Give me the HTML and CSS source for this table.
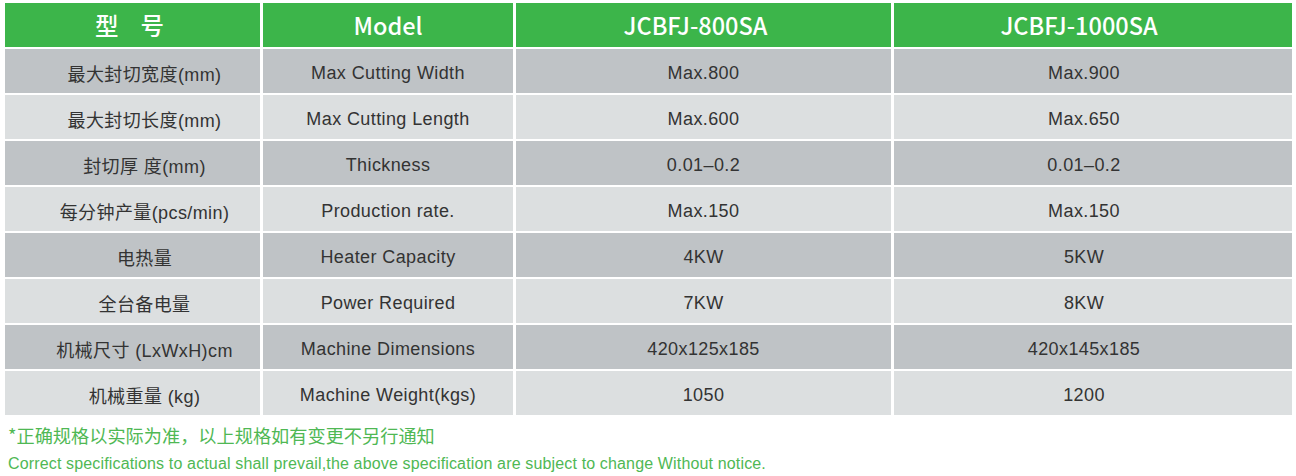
FILE: index.html
```html
<!DOCTYPE html>
<html lang="zh">
<head>
<meta charset="utf-8">
<title>Specifications</title>
<link rel="stylesheet" href="styles.css">
</head>
<body>
<div class="spec">
  <div class="cell head c1 pair"><span>型</span><span>号</span></div>
  <div class="cell head c2">Model</div>
  <div class="cell head c3">JCBFJ-800SA</div>
  <div class="cell head c4">JCBFJ-1000SA</div>

  <div class="cell dark c1">最大封切宽度(mm)</div>
  <div class="cell dark c2">Max Cutting Width</div>
  <div class="cell dark c3">Max.800</div>
  <div class="cell dark c4">Max.900</div>

  <div class="cell light c1">最大封切长度(mm)</div>
  <div class="cell light c2">Max Cutting Length</div>
  <div class="cell light c3">Max.600</div>
  <div class="cell light c4">Max.650</div>

  <div class="cell dark c1">封切厚 度(mm)</div>
  <div class="cell dark c2">Thickness</div>
  <div class="cell dark c3">0.01–0.2</div>
  <div class="cell dark c4">0.01–0.2</div>

  <div class="cell light c1">每分钟产量(pcs/min)</div>
  <div class="cell light c2">Production rate.</div>
  <div class="cell light c3">Max.150</div>
  <div class="cell light c4">Max.150</div>

  <div class="cell dark c1">电热量</div>
  <div class="cell dark c2">Heater Capacity</div>
  <div class="cell dark c3">4KW</div>
  <div class="cell dark c4">5KW</div>

  <div class="cell light c1">全台备电量</div>
  <div class="cell light c2">Power Required</div>
  <div class="cell light c3">7KW</div>
  <div class="cell light c4">8KW</div>

  <div class="cell dark c1">机械尺寸 (LxWxH)cm</div>
  <div class="cell dark c2">Machine Dimensions</div>
  <div class="cell dark c3">420x125x185</div>
  <div class="cell dark c4">420x145x185</div>

  <div class="cell light c1">机械重量 (kg)</div>
  <div class="cell light c2">Machine Weight(kgs)</div>
  <div class="cell light c3">1050</div>
  <div class="cell light c4">1200</div>
</div>
<div class="note">
  <p class="note-cn">*正确规格以实际为准，以上规格如有变更不另行通知</p>
  <p class="note-en">Correct specifications to actual shall prevail,the above specification are subject to change Without notice.</p>
</div>
</body>
</html>
```

FILE: styles.css
```css
html, body {
  margin: 0;
  background: #ffffff;
}
body {
  padding: 3px 5px 0 5px;
  font-family: "Liberation Sans", "Noto Sans CJK SC", Arial, sans-serif;
  color: #333333;
}
.spec {
  display: grid;
  grid-template-columns: 255px 250px 375px 398px;
  grid-auto-rows: 44px;
  column-gap: 3px;
  row-gap: 2px;
}
.cell {
  display: flex;
  align-items: center;
  justify-content: center;
  box-sizing: border-box;
  padding-top: 4px;
  font-size: 18px;
  letter-spacing: 0.4px;
  white-space: nowrap;
}
.c1 {
  padding-left: 24px;
}
.c4 {
  padding-right: 18px;
}
.head {
  background: #3cb54a;
  color: #ffffff;
  font-family: "Noto Sans CJK SC", sans-serif;
  font-weight: 500;
  font-size: 23.5px;
  letter-spacing: 0;
  padding-top: 0;
}
.head.c1 {
  padding-left: 0;
  padding-right: 6px;
}
.head.c3 {
  padding-right: 16px;
}
.head.c4 {
  padding-right: 28px;
}
.pair {
  gap: 22px;
}
.dark {
  background: #bfc3c6;
}
.light {
  background: #dcdfe0;
}
.note {
  padding-left: 3px;
  color: #4fb854;
}
.note p {
  margin: 0;
}
.note-cn {
  margin-top: 9px !important;
  font-family: "Noto Sans CJK SC", sans-serif;
  font-size: 18.2px;
  line-height: 22px;
}
.note-en {
  margin-top: 8px !important;
  font-size: 16px;
  letter-spacing: 0.15px;
  line-height: 19px;
}
```
